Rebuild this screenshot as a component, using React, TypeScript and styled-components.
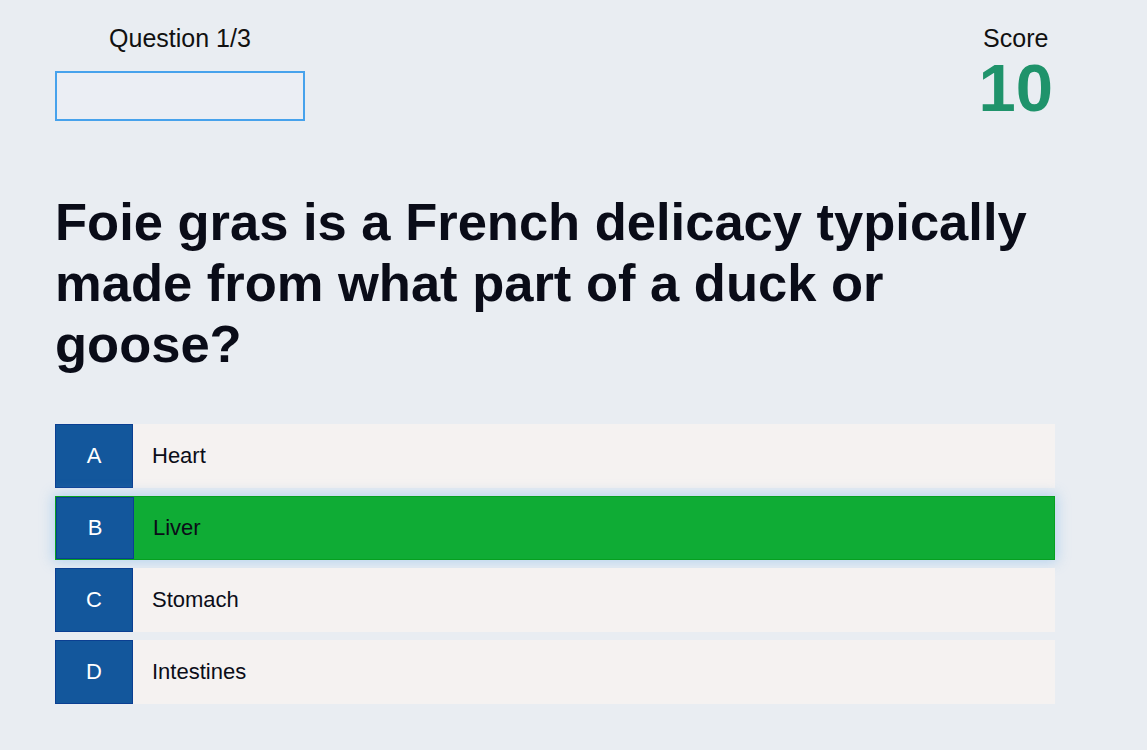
import React from "react";
import styled, { createGlobalStyle } from "styled-components";

const Global = createGlobalStyle`
  html, body { margin: 0; padding: 0; background: #e9edf2; }
  body { font-family: "Liberation Sans", Arial, sans-serif; color: #0b0d18; }
`;

const Page = styled.div`
  width: 1000px;
  padding: 24px 0 40px 55px;
`;

const Header = styled.header`
  display: flex;
  justify-content: space-between;
  align-items: flex-start;
`;

const Progress = styled.div`
  display: flex;
  flex-direction: column;
  align-items: center;
  width: 250px;
`;

const Label = styled.div`
  font-size: 25px;
  line-height: 28px;
  color: #111;
`;

const ProgressBox = styled.div`
  margin-top: 19px;
  width: 250px;
  height: 50px;
  box-sizing: border-box;
  border: 2px solid #47a2ec;
  background: #ebeef4;
`;

const ScoreCol = styled.div`
  display: flex;
  flex-direction: column;
  align-items: center;
  margin-right: 2px;
`;

const ScoreValue = styled.div`
  margin-top: 6px;
  font-size: 67px;
  line-height: 60px;
  font-weight: 700;
  color: #1f936b;
`;

const Question = styled.h1`
  margin: 70px 0 50px;
  font-size: 52.5px;
  line-height: 61px;
  font-weight: 700;
  color: #0a0c18;
  width: 1000px;
`;

const Options = styled.div`
  display: flex;
  flex-direction: column;
  gap: 8px;
`;

const Option = styled.div<{ $correct?: boolean }>`
  display: flex;
  height: 64px;
  box-sizing: border-box;
  background: ${(p) => (p.$correct ? "#0fac35" : "#f5f2f1")};
  border: ${(p) => (p.$correct ? "1px solid #06a020" : "none")};
  box-shadow: ${(p) => (p.$correct ? "0 0 12px 2px rgba(120, 180, 235, 0.45)" : "none")};
`;

const Letter = styled.div`
  width: 78px;
  flex-shrink: 0;
  box-sizing: border-box;
  border: 1px solid #0b3f92;
  background: #13579c;
  color: #fff;
  font-size: 22px;
  display: flex;
  align-items: center;
  justify-content: center;
`;

const Answer = styled.div`
  display: flex;
  align-items: center;
  padding-left: 19px;
  font-size: 22px;
  color: #0b0d18;
`;

const options = [
  { l: "A", t: "Heart" },
  { l: "B", t: "Liver", c: true },
  { l: "C", t: "Stomach" },
  { l: "D", t: "Intestines" },
];

export default function App() {
  return (
    <>
      <Global />
      <Page>
        <Header>
          <Progress>
            <Label>Question 1/3</Label>
            <ProgressBox />
          </Progress>
          <ScoreCol>
            <Label>Score</Label>
            <ScoreValue>10</ScoreValue>
          </ScoreCol>
        </Header>
        <Question>
          Foie gras is a French delicacy typically made from what part of a duck or goose?
        </Question>
        <Options>
          {options.map((o) => (
            <Option key={o.l} $correct={o.c}>
              <Letter>{o.l}</Letter>
              <Answer>{o.t}</Answer>
            </Option>
          ))}
        </Options>
      </Page>
    </>
  );
}
